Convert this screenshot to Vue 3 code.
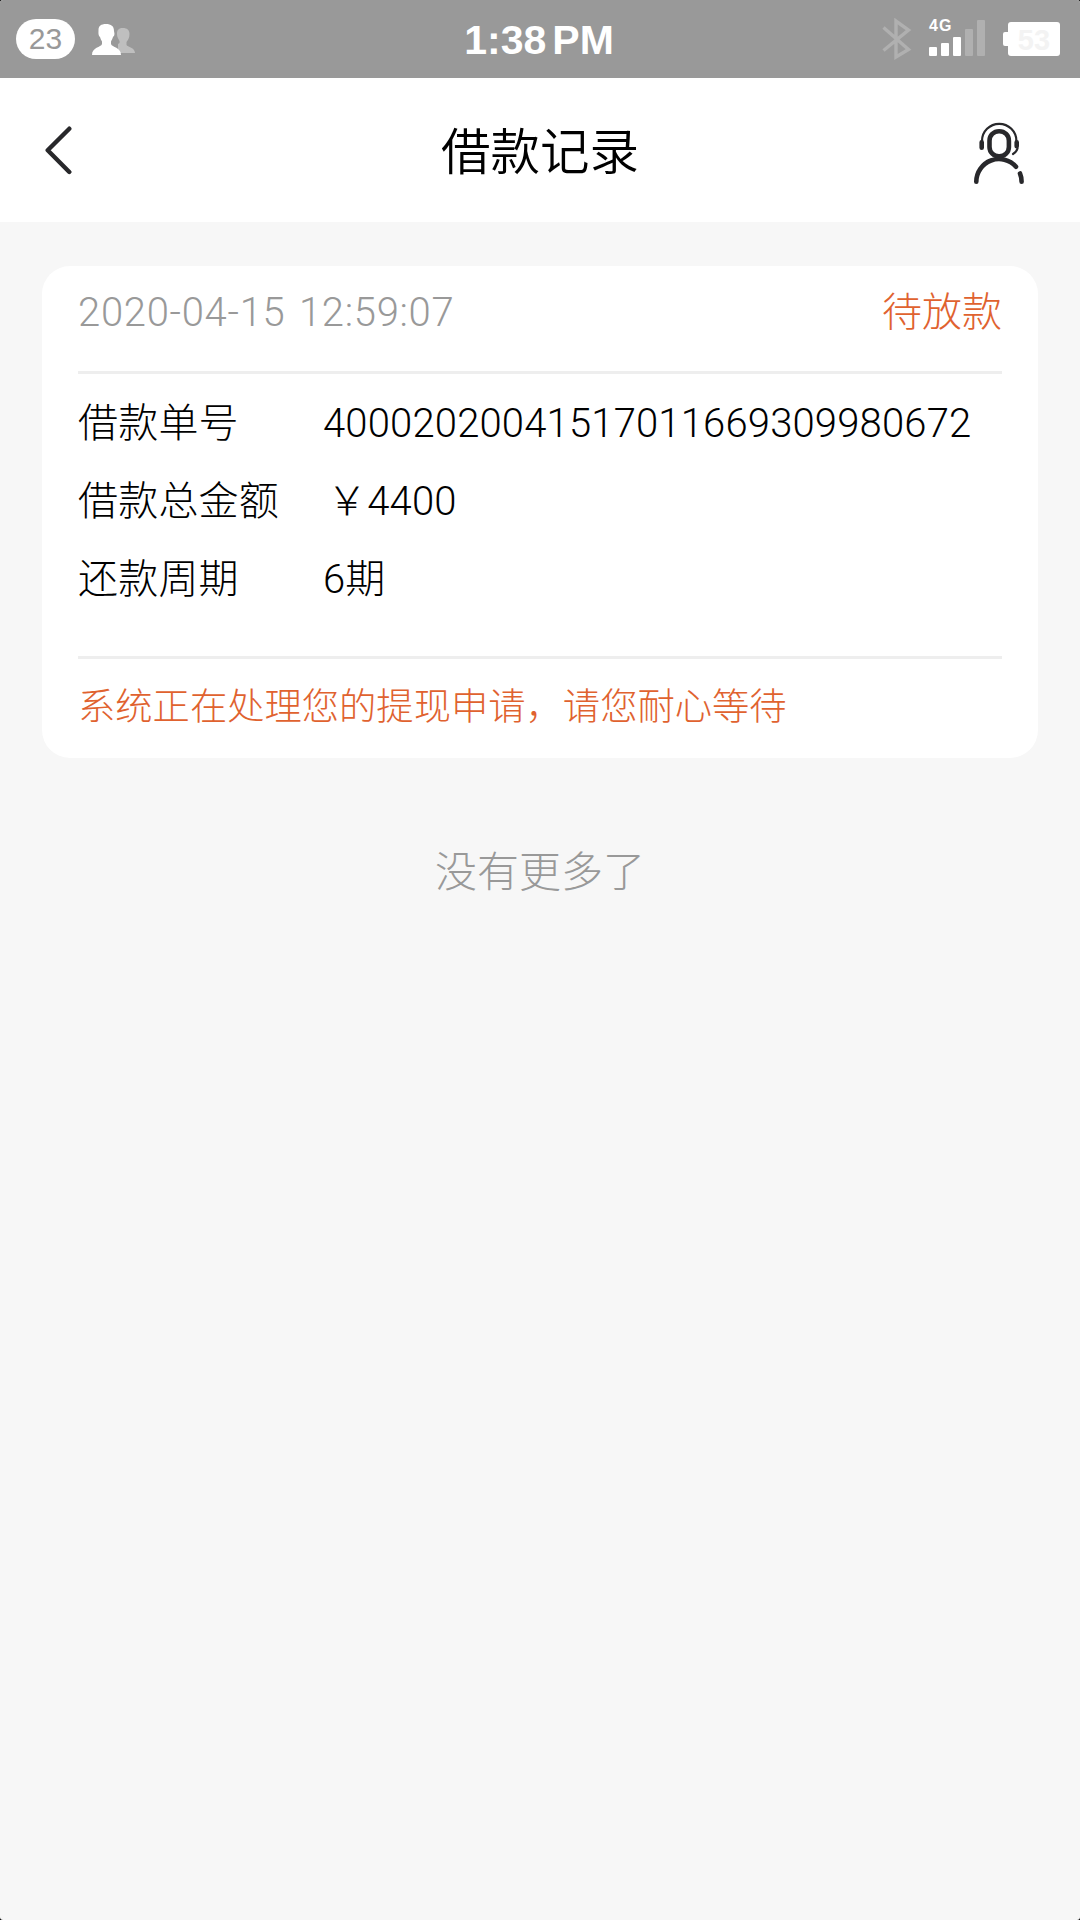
<script setup>
    import { ref } from 'vue';


    const notificaciones = ref(23);
    const hora = ref('1:38');
    const bateria = ref(53);

    //barras de cobertura, las dos ultimas sin señal
    const barras = [
      { h: 9, on: true },
      { h: 13, on: true },
      { h: 19, on: true },
      { h: 27, on: false },
      { h: 36, on: false }
    ];

    const records = ref([
      {
        date: '2020-04-15 12:59:07',
        status: '待放款',
        rows: [
          { label: '借款单号', value: '40002020041517011669309980672' },
          { label: '借款总金额', value: '￥4400', money: true },
          { label: '还款周期', value: '6期' }
        ],
        notice: '系统正在处理您的提现申请，请您耐心等待'
      }
    ]);
</script>

<template>

  <div class="screen">
    <div class="status-bar">
      <div class="side">
        <span class="badge">{{ notificaciones }}</span>
        <svg class="people" width="44" height="32" viewBox="0 0 44 32">
          <path fill="#bfbfbf" d="M31 4c4 0 6.500 2 6.500 6 0 4-1.500 6-3 8v3c1 2 8.500 2.500 8.500 8H26V20c2-1 2-2 1-4-2-3-2-5-2-7 0-3 2-5 6-5z" />
          <path fill="#fff" d="M14 0c5 0 8 2 8 7 0 1 .8 2 .3 4-.3 1-.9 1.500-1.300 2-.5 2-1.500 3-2 4.500v2.500c1 3.500 10 3 10 11H0c0-8 9-7.500 10-11v-2.500c-.7-1.500-1.500-2.500-2-4.500-.6-.5-1-1-1.300-2-.4-2-.2-3-.2-5C6.500 2 9 0 14 0z" />
        </svg>
      </div>

      <div class="clock"><span>{{ hora }}</span><span class="pm">PM</span></div>

      <div class="side side-right">
        <svg class="bluetooth" width="30" height="42" viewBox="0 0 30 42">
          <path d="M1.500 9.500L26.500 31.500L14 39V3L26.500 12L1.500 32.500" fill="none" stroke="#b0b0b0" stroke-width="3.400" />
        </svg>
        <div class="signal">
          <span class="net">4G</span>
          <i v-for="(b, index) in barras" :key="index" :class="{ off: !b.on }" :style="{ height: b.h + 'px' }"></i>
        </div>
        <div class="battery"><span>{{ bateria }}</span></div>
      </div>
    </div>

    <div class="nav">
      <svg class="back" width="30" height="50" viewBox="0 0 30 50">
        <path d="M25.300 3.700L3.700 25.300L25.300 47" fill="none" stroke="#28282b" stroke-width="4.400" stroke-linecap="round" stroke-linejoin="round" />
      </svg>
      <h1>借款记录</h1>
      <svg class="service" width="52" height="64" viewBox="0 0 52 64" fill="none" stroke="#28282b" stroke-linecap="round">
        <rect x="16.500" y="10.200" width="19.400" height="25.200" rx="9.500" stroke-width="4.600" />
        <path d="M9 20a17.200 17.200 0 0 1 34.400 0" stroke-width="2.200" />
        <path d="M8.700 21.300v5.400M43.700 21.300v4" stroke-width="4.600" />
        <path d="M44.500 27.500Q43.500 31 40 33" stroke-width="2.200" />
        <path d="M3.300 60.700A22.700 22.700 0 0 1 43 45.700M47 52.500Q48.500 56 48.600 60.700" stroke-width="4.600" />
      </svg>
    </div>

    <div class="list">
      <div v-for="(item, index) in records" :key="index" class="card">
        <div class="card-head">
          <span class="date">{{ item.date }}</span>
          <span class="state">{{ item.status }}</span>
        </div>
        <div class="card-body">
          <div v-for="row in item.rows" :key="row.label" class="row">
            <span class="label">{{ row.label }}</span>
            <span class="value" :class="{ money: row.money }">{{ row.value }}</span>
          </div>
        </div>
        <div class="notice">{{ item.notice }}</div>
      </div>
      <div class="no-more">没有更多了</div>
    </div>
  </div>

</template>

<style>
  html {
    background: #000;
  }
</style>

<style scoped>

  .screen {
    height: 1920px;
    overflow: hidden;
    border-radius: 3px;
    background: #f7f7f7;
    font-family: Roboto, "Noto Sans CJK SC", sans-serif;
    font-weight: 300;
  }
  .status-bar {
    display: flex;
    align-items: center;
    height: 78px;
    padding: 0 20px 0 16px;
    box-sizing: border-box;
    background: #999;
    color: #fff;
    font-family: "Liberation Sans", sans-serif;
  }
  .side {
    display: flex;
    flex: 1;
    align-items: center;
  }
  .side-right {
    justify-content: flex-end;
  }
  .badge {
    width: 59px;
    height: 40px;
    border-radius: 20px;
    background: #fff;
    color: #999;
    font-size: 30px;
    line-height: 40px;
    text-align: center;
  }
  .people {
    margin: 2px 0 0 17px;
  }
  .clock {
    padding: 3px 0 0 2px;
    font-size: 41px;
    font-weight: bold;
    line-height: 75px;
  }
  .pm {
    margin-left: 6px;
  }
  .signal {
    position: relative;
    display: flex;
    align-items: flex-end;
    gap: 4px;
    height: 36px;
    margin: -2px 23px 0 17px;
  }
  .signal i {
    width: 8px;
    border-radius: 1px;
    background: #fff;
  }
  .signal i.off {
    background: #b0b0b0;
  }
  .net {
    position: absolute;
    top: -3px;
    left: 0;
    font-size: 16px;
    font-weight: bold;
    letter-spacing: 1px;
    line-height: 18px;
  }
  .battery {
    position: relative;
    width: 52px;
    height: 34px;
    border-radius: 3px;
    background: #fff;
    color: #f3f3f3;
    font-size: 29px;
    font-weight: bold;
    line-height: 36px;
    text-align: center;
  }
  .battery::before {
    content: "";
    position: absolute;
    top: 10px;
    left: -5px;
    width: 6px;
    height: 14px;
    border-radius: 2px 0 0 2px;
    background: #fff;
  }
  .nav {
    display: flex;
    align-items: center;
    justify-content: space-between;
    height: 144px;
    padding: 0 55px 0 44px;
    background: #fff;
    box-sizing: border-box;
  }
  .nav h1 {
    margin: 6px 0 0 33px;
    color: #000;
    font-size: 49.500px;
    font-weight: 350;
    line-height: 72px;
  }
  .service {
    margin-top: 6px;
  }
  .list {
    padding: 44px 42px 0;
  }
  .card {
    height: 492px;
    padding: 0 36px;
    box-sizing: border-box;
    border-radius: 28px;
    background: #fff;
    color: #000;
    font-size: 40px;
  }
  .card-head {
    display: flex;
    justify-content: space-between;
    height: 108px;
    padding-top: 17px;
    box-sizing: border-box;
    border-bottom: 3px solid #eee;
    line-height: 60px;
  }
  .date {
    color: #999;
    letter-spacing: 0.7px;
    word-spacing: 3px;
  }
  .state,
  .notice {
    color: #e0622f;
  }
  .card-body {
    height: 285px;
    padding-top: 11px;
    box-sizing: border-box;
    border-bottom: 3px solid #eee;
  }
  .row {
    display: flex;
    height: 78px;
    line-height: 78px;
  }
  .label {
    width: 245px;
    line-height: 77px;
    letter-spacing: 0.2px;
  }
  .value {
    letter-spacing: 0.17px;
  }
  .value.money {
    margin-left: 4px;
  }
  .notice {
    padding-top: 18px;
    font-size: 37.300px;
    line-height: 60px;
  }
  .no-more {
    margin-top: 85px;
    color: #999;
    font-size: 42px;
    line-height: 60px;
    text-align: center;
  }

</style>
